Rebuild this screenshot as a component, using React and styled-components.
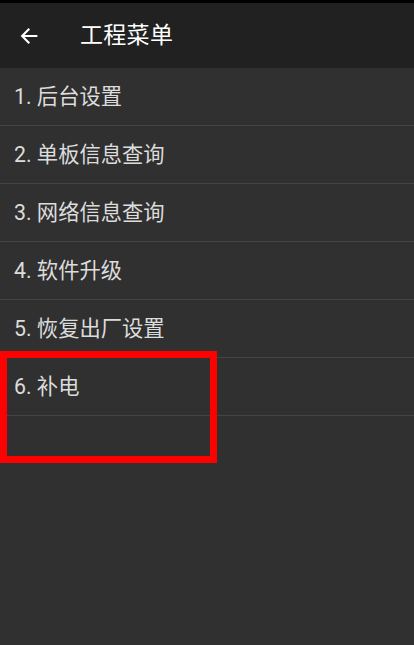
import React from "react";
import styled, { createGlobalStyle } from "styled-components";

const Global = createGlobalStyle`
  html, body { margin: 0; padding: 0; background: #303030; }
  body { font-family: Roboto, "Noto Sans CJK SC", "Noto Sans", sans-serif; }
`;

const Screen = styled.div`
  position: relative;
  width: 414px;
  height: 645px;
  background: #303030;
  overflow: hidden;
`;

const StatusStrip = styled.div`
  height: 3px;
  background: #000;
`;

const Toolbar = styled.header`
  height: 65px;
  background: #212121;
  display: flex;
  align-items: center;
  padding-left: 17px;
  box-sizing: border-box;
`;

const BackButton = styled.div`
  width: 24px;
  height: 24px;
  display: flex;
  align-items: center;
  justify-content: center;
  margin-right: 39px;
`;

const Title = styled.h1`
  margin: 0;
  font-size: 23px;
  font-weight: 400;
  color: #ffffff;
  letter-spacing: 0.3px;
  line-height: 1;
`;

const List = styled.ul`
  list-style: none;
  margin: 0;
  padding: 0;
`;

const Row = styled.li`
  height: 57px;
  border-bottom: 1px solid #444444;
  display: flex;
  align-items: center;
  padding-left: 14px;
  font-size: 21.3px;
  color: #dcdcdc;
  line-height: 1;
`;

const Highlight = styled.div`
  position: absolute;
  left: 0;
  top: 351px;
  width: 217px;
  height: 112px;
  box-sizing: border-box;
  border: 7px solid #ff0000;
`;

const items = [
  "1. 后台设置",
  "2. 单板信息查询",
  "3. 网络信息查询",
  "4. 软件升级",
  "5. 恢复出厂设置",
  "6. 补电",
];

export default function App() {
  return (
    <>
      <Global />
      <Screen>
        <StatusStrip />
        <Toolbar>
          <BackButton>
            <svg width="22" height="22" viewBox="0 0 24 24" fill="none">
              <path
                d="M20 12H5M11.5 5L4.5 12l7 7"
                stroke="#ffffff"
                strokeWidth="2.3"
                strokeLinecap="square"
              />
            </svg>
          </BackButton>
          <Title>工程菜单</Title>
        </Toolbar>
        <List>
          {items.map((t) => (
            <Row key={t}>{t}</Row>
          ))}
        </List>
        <Highlight />
      </Screen>
    </>
  );
}
